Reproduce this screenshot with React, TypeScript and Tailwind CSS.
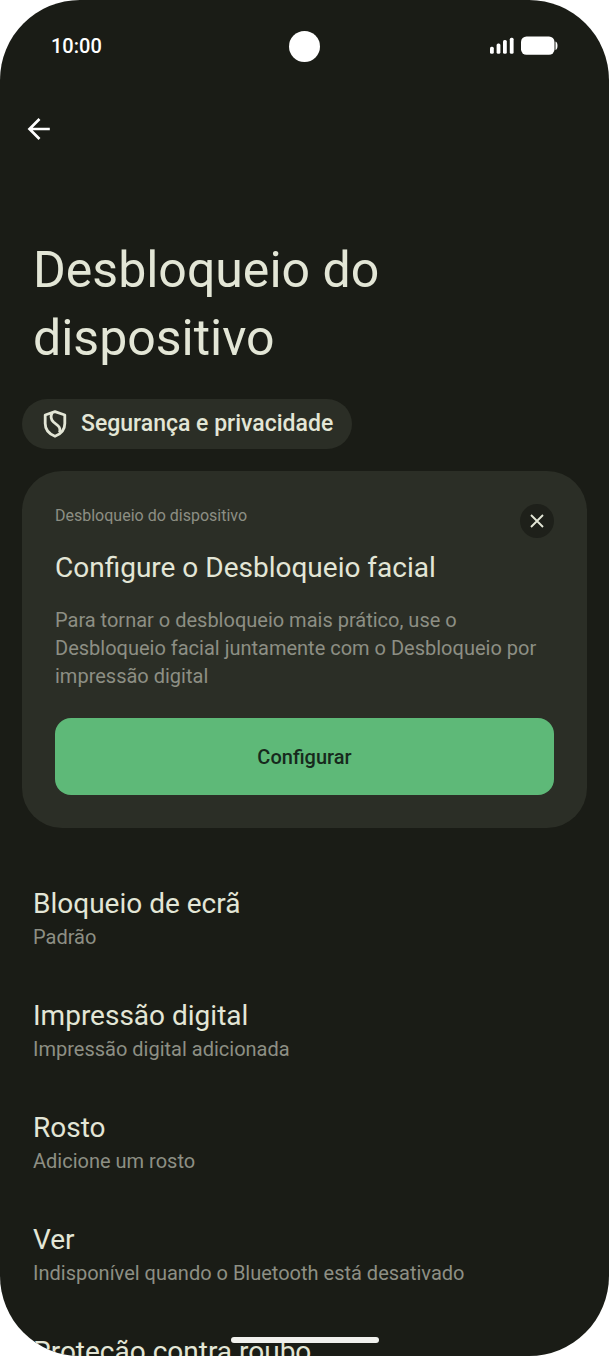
import React, { useState } from "react";

interface SettingItem {
  title: string;
  description?: string;
}

const settings: SettingItem[] = [
  { title: "Bloqueio de ecrã", description: "Padrão" },
  { title: "Impressão digital", description: "Impressão digital adicionada" },
  { title: "Rosto", description: "Adicione um rosto" },
  { title: "Ver", description: "Indisponível quando o Bluetooth está desativado" },
  { title: "Proteção contra roubo" },
];

function StatusBar() {
  return (
    <div className="grid h-[92px] shrink-0 grid-cols-3 items-center px-[51px] text-white">
      <span className="text-xl font-medium">10:00</span>
      <span className="size-[31px] justify-self-center rounded-full bg-white" />
      <svg className="h-5 w-[69px] justify-self-end" viewBox="0 0 69 20" fill="currentColor" aria-hidden="true">
        <rect x="1" y="10.8" width="3.8" height="7" rx="1.5" />
        <rect x="7.6" y="7.5" width="3.8" height="10.3" rx="1.5" />
        <rect x="14" y="4" width="3.8" height="13.8" rx="1.5" />
        <rect x="20.8" y="1.8" width="3.8" height="16" rx="1.5" />
        <rect x="32" y="0.5" width="33.5" height="18.3" rx="5.5" />
        <path d="M66.5 5.5c1.4.6 2 2 2 4.3s-.6 3.7-2 4.3z" />
      </svg>
    </div>
  );
}

function BackIcon() {
  return (
    <svg className="size-6" viewBox="0 0 24 24" fill="none" stroke="currentColor" strokeWidth="2.7" aria-hidden="true">
      <path d="M12.5 2 2.5 12l10 10M2.5 12h20.3" />
    </svg>
  );
}

function ShieldIcon() {
  return (
    <svg className="h-7 w-6" viewBox="0 0 24 28" fill="none" stroke="currentColor" strokeWidth="2.8" strokeLinejoin="round" aria-hidden="true">
      <path d="M12 1.7 21.8 5v8.5c0 6-4 10.5-9.800 12.800-5.800-2.300-9.800-6.800-9.800-12.800V5z" />
      <path d="M9 3C7.500 6.500 7.800 9.500 10.500 12l4.500 3.800c2 1.800 2.500 3.700 1.500 6.700" />
    </svg>
  );
}

export default function App() {
  const [showCard, setShowCard] = useState(true);

  return (
    <div className="relative flex h-screen flex-col overflow-hidden rounded-[80px] bg-[#1a1c16] font-['Roboto',sans-serif] text-[#e3e6d6]">
      <StatusBar />

      <main className="min-h-0 flex-1 overflow-hidden">
        <header className="px-[27px] pt-[25px]">
          <button aria-label="Voltar" className="block text-white">
            <BackIcon />
          </button>
        </header>

        <h1 className="mt-[95px] max-w-[480px] px-[33px] text-[50px] leading-[68px]">Desbloqueio do dispositivo</h1>

        <div className="mt-[27px] px-[22px]">
          <button className="flex h-[50px] items-center gap-[14px] rounded-full bg-[#2b2e26] pr-[19px] pl-[21px] text-[23px] font-medium">
            <ShieldIcon />
            Segurança e privacidade
          </button>

          {showCard && (
            <section className="mt-[22px] rounded-[40px] bg-[#2b2e26] p-[33px]">
              <div className="flex h-[34px] items-start justify-between">
                <span className="text-base text-[#8d8f84]">Desbloqueio do dispositivo</span>
                <button
                  aria-label="Fechar"
                  onClick={() => setShowCard(false)}
                  className="flex size-[34px] items-center justify-center rounded-full bg-[#1e201a]"
                >
                  <svg className="size-4" viewBox="0 0 16 16" fill="none" stroke="currentColor" strokeWidth="1.9" aria-hidden="true">
                    <path d="M2 2l12 12M14 2 2 14" />
                  </svg>
                </button>
              </div>
              <h2 className="mt-3 text-[28px] leading-9">Configure o Desbloqueio facial</h2>
              <p className="mt-5 text-xl leading-7 text-[#8d8f84]">
                Para tornar o desbloqueio mais prático, use o Desbloqueio facial juntamente com o Desbloqueio por
                impressão digital
              </p>
              <button className="mt-7 h-[77px] w-full rounded-2xl bg-[#5eb978] text-xl font-medium text-[#17291d]">
                Configurar
              </button>
            </section>
          )}
        </div>

        <ul className="mt-[57px] flex flex-col gap-[46px] px-[33px]">
          {settings.map((item) => (
            <li key={item.title}>
              <a href="#" className="block">
                <span className="block text-[28px] leading-[38px]">{item.title}</span>
                {item.description && (
                  <span className="block text-xl leading-7 text-[#8d8f84]">{item.description}</span>
                )}
              </a>
            </li>
          ))}
        </ul>
      </main>

      {/* Gesture bar */}
      <div className="absolute bottom-[13px] left-1/2 h-[6px] w-[148px] -translate-x-1/2 rounded-full bg-[#f1f1ee]" />
    </div>
  );
}
